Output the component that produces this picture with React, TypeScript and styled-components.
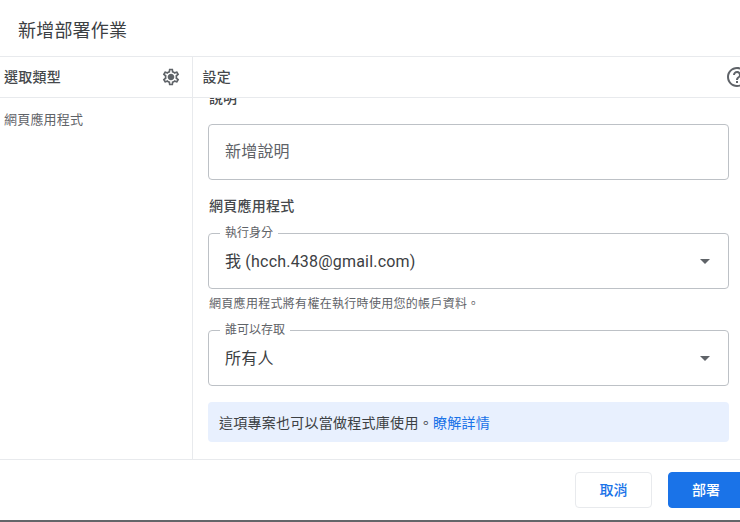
import React from "react";
import styled, { createGlobalStyle } from "styled-components";

const GlobalStyle = createGlobalStyle`
  html, body {
    margin: 0;
    padding: 0;
    background: #fff;
  }
  * {
    box-sizing: border-box;
  }
`;

const FONT = `Roboto, "Noto Sans CJK TC", sans-serif`;

const GearIcon = () => (
  <svg width="20" height="20" viewBox="0 0 24 24" fill="#5f6368">
    <path d="M19.43 12.98c.04-.32.07-.64.07-.98 0-.34-.03-.66-.07-.98l2.11-1.65c.19-.15.24-.42.12-.64l-2-3.46c-.09-.16-.26-.25-.44-.25-.06 0-.12.01-.17.03l-2.49 1c-.52-.4-1.08-.73-1.69-.98l-.38-2.65C14.46 2.18 14.25 2 14 2h-4c-.25 0-.46.18-.49.42l-.38 2.65c-.61.25-1.17.59-1.69.98l-2.49-1c-.06-.02-.12-.03-.18-.03-.17 0-.34.09-.43.25l-2 3.46c-.13.22-.07.49.12.64l2.11 1.65c-.04.32-.07.65-.07.98 0 .33.03.66.07.98l-2.11 1.65c-.19.15-.24.42-.12.64l2 3.46c.09.16.26.25.44.25.06 0 .12-.01.17-.03l2.49-1c.52.4 1.08.73 1.69.98l.38 2.65c.03.24.24.42.49.42h4c.25 0 .46-.18.49-.42l.38-2.65c.61-.25 1.17-.59 1.69-.98l2.49 1c.06.02.12.03.18.03.17 0 .34-.09.43-.25l2-3.46c.12-.22.07-.49-.12-.64l-2.11-1.65zm-1.98-1.71c.04.31.05.52.05.73 0 .21-.02.43-.05.73l-.14 1.13.89.7 1.08.84-.7 1.21-1.27-.51-1.04-.42-.9.68c-.43.32-.84.56-1.25.73l-1.06.43-.16 1.13-.2 1.35h-1.4l-.19-1.35-.16-1.13-1.06-.43c-.43-.18-.83-.41-1.23-.71l-.91-.7-1.06.43-1.27.51-.7-1.21 1.08-.84.89-.7-.14-1.13c-.03-.31-.05-.54-.05-.74s.02-.43.05-.73l.14-1.13-.89-.7-1.08-.84.7-1.21 1.27.51 1.04.42.9-.68c.43-.32.84-.56 1.25-.73l1.06-.43.16-1.13.2-1.35h1.39l.19 1.35.16 1.13 1.06.43c.43.18.83.41 1.23.71l.91.7 1.06-.43 1.27-.51.7 1.21-1.07.85-.89.7.14 1.13zM12 8c-2.21 0-4 1.79-4 4s1.79 4 4 4 4-1.79 4-4-1.79-4-4-4z" />
  </svg>
);

const HelpIcon = () => (
  <svg width="24" height="24" viewBox="0 0 24 24" fill="#5f6368">
    <path d="M11 18h2v-2h-2v2zm1-16C6.48 2 2 6.48 2 12s4.48 10 10 10 10-4.48 10-10S17.52 2 12 2zm0 18c-4.41 0-8-3.59-8-8s3.59-8 8-8 8 3.59 8 8-3.59 8-8 8zm0-14c-2.21 0-4 1.79-4 4h2c0-1.1.9-2 2-2s2 .9 2 2c0 2-3 1.75-3 5h2c0-2.25 3-2.5 3-5 0-2.21-1.79-4-4-4z" />
  </svg>
);

const Page = styled.div`
  width: 740px;
  height: 522px;
  overflow: hidden;
  display: flex;
  flex-direction: column;
  background: #fff;
  font-family: ${FONT};
  color: #3c4043;
`;

const TitleBar = styled.div`
  height: 57px;
  flex: none;
  display: flex;
  align-items: center;
  padding: 2px 18px 0;
  font-size: 18px;
  letter-spacing: 0.2px;
  color: #3c4043;
  border-bottom: 1px solid #e8eaed;
`;

const Columns = styled.div`
  height: 402px;
  flex: none;
  display: flex;
`;

const Sidebar = styled.div`
  width: 193px;
  flex: none;
  border-right: 1px solid #e8eaed;
`;

const ColumnHeader = styled.div`
  height: 41px;
  display: flex;
  align-items: center;
  justify-content: space-between;
  border-bottom: 1px solid #e8eaed;
  font-size: 14px;
  font-weight: 500;
  letter-spacing: 0.25px;
  color: #45484b;
`;

const SidebarHeader = styled(ColumnHeader)`
  padding: 0 11px 0 4px;
`;

const SettingsHeader = styled(ColumnHeader)`
  padding: 0 0 0 9.5px;
`;

const HeaderLabel = styled.span`
  padding-bottom: 2px;
`;

const HelpSlot = styled.span`
  width: 24px;
  height: 24px;
  margin-right: -9px;
  display: flex;
`;

const IconSlot = styled.span`
  width: 20px;
  height: 20px;
  display: flex;
`;

const SidebarItem = styled.div`
  padding: 13px 0 0 4px;
  font-size: 13px;
  letter-spacing: 0.2px;
  line-height: 18px;
  color: #5f6368;
`;

const Settings = styled.div`
  flex: 1;
  min-width: 0;
  display: flex;
  flex-direction: column;
`;

const ScrollArea = styled.div`
  flex: 1;
  min-height: 0;
  overflow: hidden;
  padding: 0 11px 0 15px;
`;

const ClippedLabel = styled.div`
  margin: -10px 0 0 1px;
  height: 20px;
  line-height: 20px;
  font-size: 14px;
  font-weight: 500;
  color: #45484b;
`;

const TextField = styled.div`
  margin-top: 16px;
  height: 56px;
  display: flex;
  align-items: center;
  padding: 0 16px 4px;
  border: 1px solid #bdc1c6;
  border-radius: 4px;
  font-size: 16px;
  letter-spacing: 0.2px;
  color: #5f6368;
`;

const SectionTitle = styled.div`
  margin: 16px 0 0 1px;
  height: 20px;
  line-height: 20px;
  font-size: 14px;
  font-weight: 500;
  letter-spacing: 0.25px;
  color: #45484b;
`;

const SelectField = styled.div<{ $top: number }>`
  position: relative;
  margin-top: ${(p) => p.$top}px;
  height: 56px;
  display: flex;
  align-items: center;
  justify-content: space-between;
  padding: 0 18px 3px 16px;
  border: 1px solid #bdc1c6;
  border-radius: 4px;
  font-size: 16px;
  letter-spacing: 0.2px;
  color: #3c4043;
`;

const FloatingLabel = styled.span`
  position: absolute;
  top: -8px;
  left: 11px;
  padding: 0 5px;
  background: #fff;
  font-size: 12px;
  letter-spacing: 0;
  line-height: 15px;
  color: #5f6368;
`;

const Arrow = styled.span`
  width: 0;
  height: 0;
  margin-top: 3px;
  border-left: 5px solid transparent;
  border-right: 5px solid transparent;
  border-top: 5px solid #5f6368;
`;

const Hint = styled.div`
  margin: 7px 0 0 1px;
  height: 16px;
  line-height: 16px;
  font-size: 12px;
  letter-spacing: 0.3px;
  color: #5f6368;
`;

const InfoBox = styled.div`
  margin-top: 16px;
  height: 40px;
  display: flex;
  align-items: center;
  padding: 0 11px;
  background: #e8f0fe;
  border-radius: 4px;
  font-size: 14px;
  letter-spacing: 0.26px;
  color: #3c4043;
`;

const InfoLink = styled.a`
  color: #1a73e8;
  text-decoration: none;
`;

const Footer = styled.div`
  height: 61px;
  flex: none;
  display: flex;
  align-items: flex-start;
  justify-content: flex-end;
  gap: 16px;
  padding-top: 12px;
  border-top: 1px solid #e8eaed;
`;

const Button = styled.button<{ $primary?: boolean }>`
  height: 36px;
  width: ${(p) => (p.$primary ? "76px" : "77px")};
  margin-right: ${(p) => (p.$primary ? "-4px" : "0")};
  border-radius: 4px;
  border: 1px solid ${(p) => (p.$primary ? "#1a73e8" : "#e8eaed")};
  background: ${(p) => (p.$primary ? "#1a73e8" : "#fff")};
  color: ${(p) => (p.$primary ? "#fff" : "#1a73e8")};
  font-family: ${FONT};
  font-size: 14px;
  font-weight: 500;
  padding: 0 0 3px;
`;

const BottomEdge = styled.div`
  height: 2px;
  flex: none;
  background: #636669;
`;

export default function App() {
  return (
    <Page>
      <GlobalStyle />
      <TitleBar>新增部署作業</TitleBar>
      <Columns>
        <Sidebar>
          <SidebarHeader>
            <HeaderLabel>選取類型</HeaderLabel>
            <IconSlot>
              <GearIcon />
            </IconSlot>
          </SidebarHeader>
          <SidebarItem>網頁應用程式</SidebarItem>
        </Sidebar>
        <Settings>
          <SettingsHeader>
            <HeaderLabel>設定</HeaderLabel>
            <HelpSlot>
              <HelpIcon />
            </HelpSlot>
          </SettingsHeader>
          <ScrollArea>
            <ClippedLabel>說明</ClippedLabel>
            <TextField>新增說明</TextField>
            <SectionTitle>網頁應用程式</SectionTitle>
            <SelectField $top={17}>
              <FloatingLabel>執行身分</FloatingLabel>
              我 (hcch.438@gmail.com)
              <Arrow />
            </SelectField>
            <Hint>網頁應用程式將有權在執行時使用您的帳戶資料。</Hint>
            <SelectField $top={18}>
              <FloatingLabel>誰可以存取</FloatingLabel>
              所有人
              <Arrow />
            </SelectField>
            <InfoBox>
              這項專案也可以當做程式庫使用。
              <InfoLink href="#">瞭解詳情</InfoLink>
            </InfoBox>
          </ScrollArea>
        </Settings>
      </Columns>
      <Footer>
        <Button>取消</Button>
        <Button $primary>部署</Button>
      </Footer>
      <BottomEdge />
    </Page>
  );
}
